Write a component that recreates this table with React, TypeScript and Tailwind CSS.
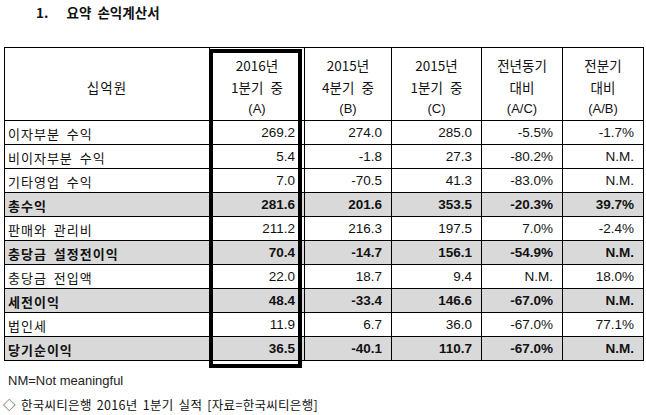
const rows = [
  { label: '이자부분 수익', v: ['269.2', '274.0', '285.0', '-5.5%', '-1.7%'], bold: false },
  { label: '비이자부분 수익', v: ['5.4', '-1.8', '27.3', '-80.2%', 'N.M.'], bold: false },
  { label: '기타영업 수익', v: ['7.0', '-70.5', '41.3', '-83.0%', 'N.M.'], bold: false },
  { label: '총수익', v: ['281.6', '201.6', '353.5', '-20.3%', '39.7%'], bold: true },
  { label: '판매와 관리비', v: ['211.2', '216.3', '197.5', '7.0%', '-2.4%'], bold: false },
  { label: '충당금 설정전이익', v: ['70.4', '-14.7', '156.1', '-54.9%', 'N.M.'], bold: true },
  { label: '충당금 전입액', v: ['22.0', '18.7', '9.4', 'N.M.', '18.0%'], bold: false },
  { label: '세전이익', v: ['48.4', '-33.4', '146.6', '-67.0%', 'N.M.'], bold: true },
  { label: '법인세', v: ['11.9', '6.7', '36.0', '-67.0%', '77.1%'], bold: false },
  { label: '당기순이익', v: ['36.5', '-40.1', '110.7', '-67.0%', 'N.M.'], bold: true },
];

const headers = [
  ['2016년', '1분기 중', '(A)'],
  ['2015년', '4분기 중', '(B)'],
  ['2015년', '1분기 중', '(C)'],
  ['전년동기', '대비', '(A/C)'],
  ['전분기', '대비', '(A/B)'],
];

const kr = "font-['Malgun_Gothic','Noto_Sans_CJK_KR',sans-serif]";
const num = "font-['Liberation_Sans','Noto_Sans_CJK_KR',sans-serif]";

export default function App() {
  return (
    <div className="w-[646px] h-[415px] bg-white text-[#111] overflow-hidden">
      <div className={`${kr} pl-[36px] pt-[2px] text-[13.5px] font-bold leading-[20px] [word-spacing:3px]`}>
        1.&nbsp;&nbsp;&nbsp;요약 손익계산서
      </div>

      <div className="relative ml-[4px] mt-[25px] w-[640px]">
        <table className="table-fixed border-collapse w-[640px]">
          <colgroup>
            <col className="w-[205px]" />
            <col className="w-[95px]" />
            <col className="w-[87px]" />
            <col className="w-[90px]" />
            <col className="w-[81px]" />
            <col className="w-[81px]" />
          </colgroup>
          <thead>
            <tr>
              <th className={`${kr} h-[73px] p-0 border border-black text-center font-normal text-[13.5px] pt-[6px] tracking-[1px]`}>
                십억원
              </th>
              {headers.map((h, i) => (
                <th
                  key={i}
                  className={`h-[73px] p-0 border border-black text-center font-normal text-[13.5px] leading-[22px] pt-[6px] [word-spacing:4px] ${kr}`}
                >
                  <div>{h[0]}</div>
                  <div>{h[1]}</div>
                  <div className={`${num} text-[13px]`}>{h[2]}</div>
                </th>
              ))}
            </tr>
          </thead>
          <tbody>
            {rows.map((r) => (
              <tr
                key={r.label}
                className={r.bold ? 'bg-[#d9d9d9] font-bold' : 'bg-white'}
              >
                <td className={`${kr} h-[24px] p-0 border border-black pl-[3px] text-[13px] tracking-[1px] [word-spacing:3px] leading-[20px] pt-[3px]`}>
                  {r.label}
                </td>
                {r.v.map((v, i) => (
                  <td
                    key={i}
                    className={`${num} h-[24px] p-0 border border-black text-right text-[13.5px] leading-[20px] pt-[1px] pr-[9px]`}
                  >
                    {v}
                  </td>
                ))}
              </tr>
            ))}
          </tbody>
        </table>
        <div className="absolute left-[205px] top-[2px] w-[93px] h-[319px] border-[4px] border-black pointer-events-none" />
      </div>

      <div className={`${num} pl-[8px] mt-[11px] text-[13px] leading-[18px] text-[#222]`}>
        NM=Not meaningful
      </div>
      <div className={`${kr} pl-[3px] mt-[6px] text-[12.5px] leading-[18px] text-[#111] tracking-[0.3px] [word-spacing:2px]`}>
        ◇ 한국씨티은행 2016년 1분기 실적 [자료=한국씨티은행]
      </div>
    </div>
  );
}
